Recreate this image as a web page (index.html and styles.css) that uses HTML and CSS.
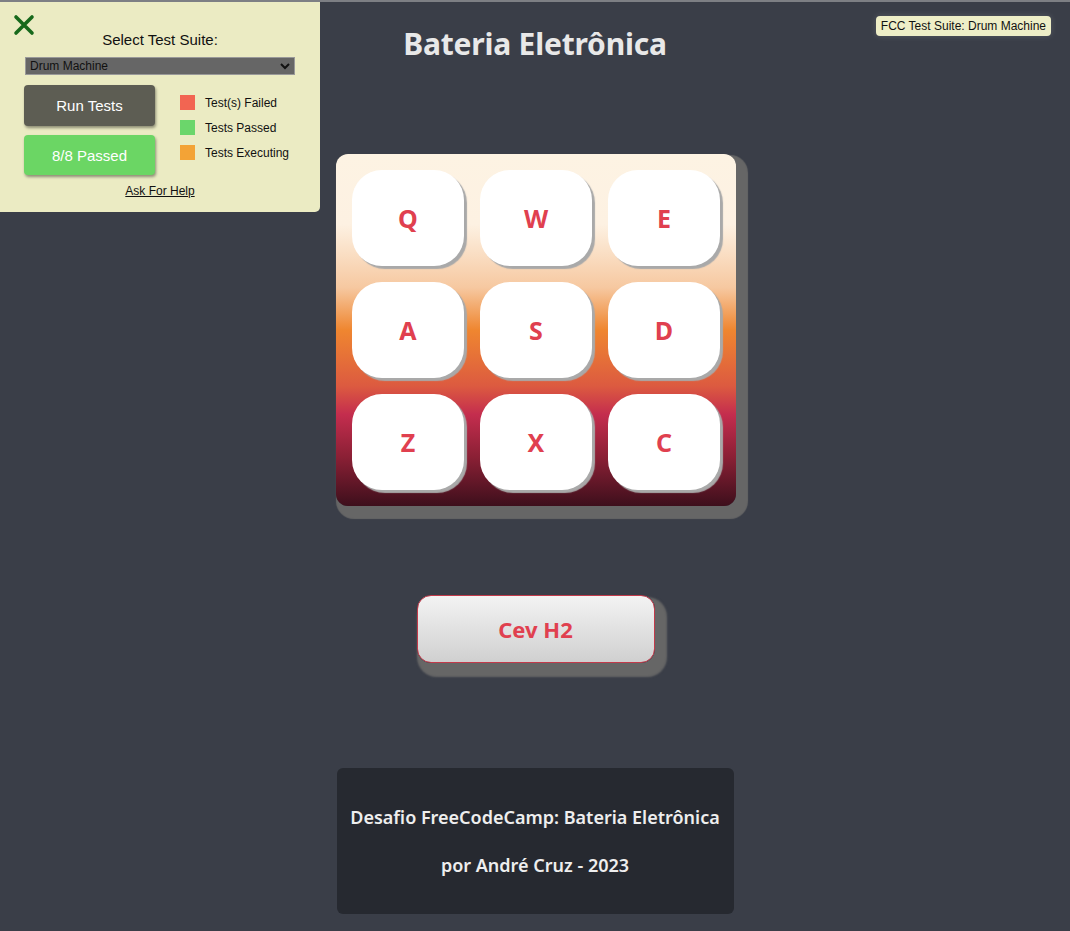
FILE: index.html
```html
<!DOCTYPE html>
<html lang="pt-BR">
<head>
<meta charset="utf-8">
<title>Bateria Eletrônica</title>
<link rel="stylesheet" href="styles.css">
</head>
<body>
<div class="topline"></div>
<main class="app">
  <h1 class="title">Bateria Eletrônica</h1>
  <div id="drum-machine" class="machine">
    <div class="pads">
      <div class="pad">Q</div>
      <div class="pad">W</div>
      <div class="pad">E</div>
      <div class="pad">A</div>
      <div class="pad">S</div>
      <div class="pad">D</div>
      <div class="pad">Z</div>
      <div class="pad">X</div>
      <div class="pad">C</div>
    </div>
  </div>
  <div id="display" class="display">Cev H2</div>
  <footer class="footer">
    <p>Desafio FreeCodeCamp: Bateria Eletrônica</p>
    <p>por André Cruz - 2023</p>
  </footer>
</main>

<div class="fcc-panel">
  <div class="close">
    <svg width="22" height="22" viewBox="0 0 22 22"><path d="M3 3 L19 19 M19 3 L3 19" stroke="#17691b" stroke-width="3.6" stroke-linecap="round"/></svg>
  </div>
  <div class="suite-label">Select Test Suite:</div>
  <div class="select">
    <span>Drum Machine</span>
    <svg width="10" height="7" viewBox="0 0 10 7"><path d="M1 1 L5 5 L9 1" fill="none" stroke="#111" stroke-width="2"/></svg>
  </div>
  <div class="panel-row">
    <div class="buttons">
      <div class="btn run">Run Tests</div>
      <div class="btn passed">8/8 Passed</div>
    </div>
    <ul class="legend">
      <li><span class="sq red"></span>Test(s) Failed</li>
      <li><span class="sq green"></span>Tests Passed</li>
      <li><span class="sq orange"></span>Tests Executing</li>
    </ul>
  </div>
  <a class="help">Ask For Help</a>
</div>
<div class="fcc-badge">FCC Test Suite: Drum Machine</div>
</body>
</html>
```
FILE: styles.css
```css
html, body {
  margin: 0;
  padding: 0;
}
body {
  background: #3a3e48;
  min-height: 931px;
  font-family: "Noto Sans", "Open Sans", sans-serif;
}
.topline {
  height: 2px;
  background: #7d7f84;
}
.app {
  display: flex;
  flex-direction: column;
  align-items: center;
}
.title {
  margin: 22px 0 0;
  font-size: 30px;
  line-height: 40px;
  font-weight: 700;
  color: #e8e8e8;
  letter-spacing: -0.2px;
}
.machine {
  margin-top: 90px;
  width: 400px;
  box-sizing: border-box;
  padding: 16px;
  border-radius: 12px;
  background: linear-gradient(to bottom, #fdf3e3 0%, #fdf1e2 20%, #f6c8a0 38%, #ef8630 50%, #dc5a40 66%, #c42d4e 74%, #8b2035 86%, #3d0f1c 100%);
  box-shadow: 6px 7px 1px 6px #666666;
  margin-left: 2px;
}
.pads {
  display: grid;
  grid-template-columns: repeat(3, 112px);
  grid-auto-rows: 96px;
  gap: 16px;
}
.pad {
  background: #ffffff;
  border-radius: 30px;
  box-shadow: 3px 3px 1px #a9a9a9;
  display: flex;
  align-items: center;
  justify-content: center;
  color: #e0404f;
  font-weight: 700;
  font-size: 25px;
}
.display {
  margin-top: 89px;
  width: 238px;
  height: 68px;
  box-sizing: border-box;
  border: 1px solid #c23a4a;
  border-radius: 14px;
  background: linear-gradient(to bottom, #f3f3f3, #d0d0d0);
  box-shadow: 6px 8px 2px 6px #666666;
  display: flex;
  align-items: center;
  justify-content: center;
  color: #e0404f;
  font-weight: 700;
  font-size: 22px;
  margin-left: 1px;
}
.footer {
  margin-top: 105px;
  width: 397px;
  height: 146px;
  box-sizing: border-box;
  background: #262930;
  border-radius: 6px;
  display: flex;
  flex-direction: column;
  align-items: center;
  justify-content: center;
  gap: 22px;
  color: #eeeeee;
  font-size: 18px;
  font-weight: 600;
}
.footer p {
  margin: 0;
  line-height: 26px;
}

/* FCC overlay panel */
.fcc-panel {
  position: absolute;
  left: 0;
  top: 2px;
  width: 320px;
  height: 210px;
  box-sizing: border-box;
  background: #ebebc3;
  border-radius: 0 0 5px 0;
  font-family: "Liberation Sans", Arial, sans-serif;
  color: #111;
  display: flex;
  flex-direction: column;
  align-items: center;
  padding-top: 29px;
}
.close {
  position: absolute;
  left: 13px;
  top: 12px;
  width: 22px;
  height: 22px;
}
.suite-label {
  font-size: 15px;
  line-height: 17px;
}
.select {
  margin-top: 9px;
  width: 270px;
  height: 18px;
  box-sizing: border-box;
  background: #666666;
  border: 1px solid #999999;
  display: flex;
  align-items: center;
  justify-content: space-between;
  padding: 0 4px 0 4px;
  font-size: 12px;
  color: #111;
}
.panel-row {
  margin-top: 10px;
  width: 272px;
  display: flex;
  gap: 25px;
  padding-left: 0;
}
.buttons {
  display: flex;
  flex-direction: column;
  gap: 9px;
}
.btn {
  width: 131px;
  height: 41px;
  border-radius: 4px;
  display: flex;
  align-items: center;
  justify-content: center;
  color: #ffffff;
  font-size: 15px;
  box-shadow: 1px 2px 3px rgba(0,0,0,0.4);
}
.run { background: #5d5d53; }
.passed { background: #6bd664; height: 40px; }
.legend {
  list-style: none;
  margin: 0;
  padding: 10px 0 0;
  display: flex;
  flex-direction: column;
  gap: 10px;
  font-size: 12px;
}
.legend li {
  display: flex;
  align-items: center;
  gap: 10px;
  height: 15px;
}
.sq {
  display: inline-block;
  width: 15px;
  height: 15px;
}
.red { background: #f26552; }
.green { background: #6bd66b; }
.orange { background: #f3a336; }
.help {
  margin-top: 9px;
  font-size: 12px;
  text-decoration: underline;
  color: #111;
}
.fcc-badge {
  position: absolute;
  right: 19px;
  top: 16px;
  background: #eeeec7;
  border-radius: 4px;
  padding: 0 5px;
  height: 20px;
  line-height: 20px;
  font-family: "Liberation Sans", Arial, sans-serif;
  font-size: 12px;
  color: #111;
  box-shadow: 0 0 6px rgba(255,255,255,0.15);
}
```
